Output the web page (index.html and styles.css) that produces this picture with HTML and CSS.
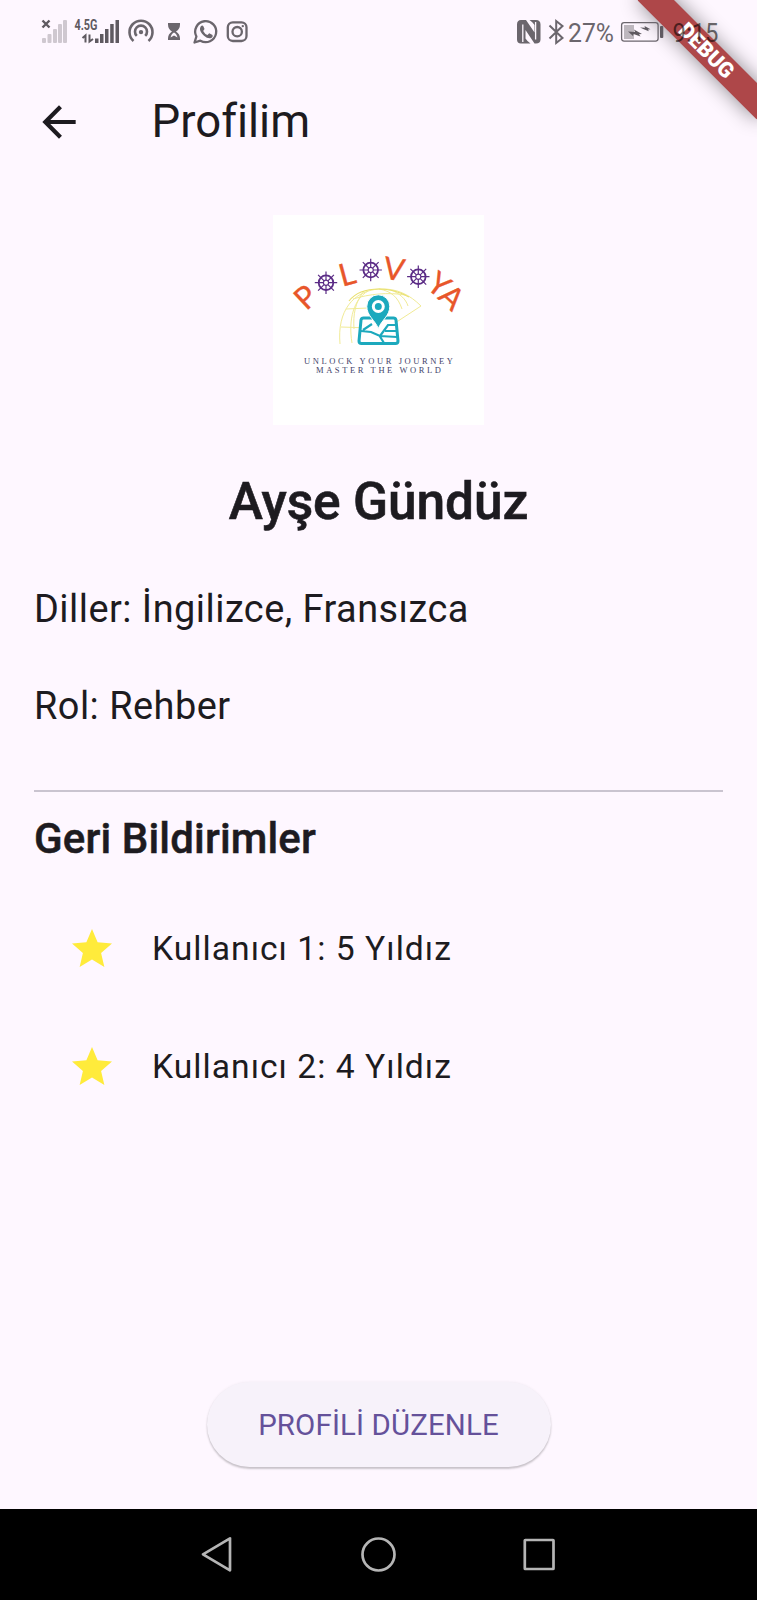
FILE: index.html
```html
<!DOCTYPE html>
<html lang="tr">
<head>
<meta charset="utf-8">
<title>Profilim</title>
<link rel="stylesheet" href="styles.css">
</head>
<body>
<div class="screen">
  <div class="ribbon"><span>DEBUG</span></div>
  <div class="status">
    <svg class="status-left" width="230" height="64" viewBox="30 0 230 64">
      <g fill="#cfc8d0"><rect x="42" y="38" width="4" height="5" rx="1"/><rect x="47.500" y="34" width="4" height="9" rx="1"/><rect x="53" y="29" width="4" height="14" rx="1"/><rect x="58" y="24" width="4" height="19" rx="1"/><rect x="63" y="20" width="4" height="23" rx="1"/></g>
      <path d="M42.500 20.500l7 7M49.500 20.500l-7 7" stroke="#5f5a61" stroke-width="2.400"/>
      <text class="net" x="74.500" y="30" textLength="23" lengthAdjust="spacingAndGlyphs">4.5G</text>
      <g fill="#5f5a61"><rect x="95" y="38.500" width="3.500" height="4.500"/><rect x="100" y="34" width="3.500" height="9"/><rect x="105" y="29" width="3.500" height="14"/><rect x="110.200" y="24" width="3.500" height="19"/><rect x="115.500" y="20" width="3.500" height="23"/></g>
      <path d="M82.500 38l3-2.500v7M89.500 34.500v7l3.500-2.500" fill="none" stroke="#5f5a61" stroke-width="2"/>
      <g transform="translate(0 -.6)"><g fill="none" stroke="#6b666d" stroke-width="2.600"><path d="M133.500 41.500a11.500 11.500 0 1 1 15 0"/><path d="M136.800 37a6 6 0 1 1 8.400 0" transform="translate(0 -.500)"/></g>
      <circle cx="141" cy="32.700" r="2.200" fill="#6b666d"/></g>
      <g transform="translate(0 4.500)">
        <path d="M168 18.500h12v1.500q0 4.500-4 7 4 2.500 4 7v1.500h-12V34q0-4.500 4-7-4-2.500-4-7z" fill="#6b666d"/>
        <path d="M170.500 33q1-4 3.500-5 2.500 1 3.500 5l-3.500-2z" fill="#fef7ff"/>
        <path d="M194.500 38.500l1.900-6a10.500 10.500 0 1 1 4 4.200z" fill="none" stroke="#6b666d" stroke-width="2.300" stroke-linejoin="round" transform="translate(0 -.5)"/>
        <path d="M201 21.500q1.500-1.300 2.500.5l1 2.500-1.300 2q1.500 3 4.300 4l1.700-1.700 3.300 1.700q.8 2.500-2 3.200-3 .6-6.500-2.500-4.500-4.200-4-7.200.2-1.500 1-2.500z" fill="#6b666d"/>
        <rect x="227.800" y="17.800" width="18.700" height="18.700" rx="5" fill="none" stroke="#6b666d" stroke-width="2.300"/>
        <circle cx="237.200" cy="27.200" r="4.700" fill="none" stroke="#6b666d" stroke-width="2.300"/><circle cx="242.800" cy="21.600" r="1.200" fill="#6b666d"/>
      </g>
    </svg>
    <svg class="status-right" width="230" height="64" viewBox="510 0 230 64">
      <path d="M521 20h5l8.500 12.500V25l-2-2.500L529.500 20H536q4.500 0 4.500 4.500v15q0 4-4.500 4h-1.500L525.500 30v8.500l2 2.500 3 2.500H521q-4 0-4-4v-15q0-4.500 4-4.500z" fill="#6b666d"/>
      <path d="M522.800 42V24.500M535.600 39.500V22" stroke="#fef7ff" stroke-width="1.300"/>
      <path d="M549.500 25.500l13 12.500-6.300 5V21l6.300 5-13 12.500" fill="none" stroke="#6b666d" stroke-width="2"/>
      <text class="stat" x="568" y="41.500" textLength="46" lengthAdjust="spacingAndGlyphs">27%</text>
      <rect x="621.600" y="22.600" width="36.500" height="18.500" rx="2.500" fill="none" stroke="#6b666d" stroke-width="1.300"/>
      <rect x="624" y="25" width="10" height="14" fill="#bdb7be"/>
      <path d="M628 31.500l7 .5-1-2.500 8 4.500-3 .2 1.500 2.300-7-2.500-.5 2zM640 27.500l5 .3-.5-1.800 6 3.300-2.500.2.800 1.800-5-2z" fill="#5f5a61"/>
      <rect x="660" y="26" width="3.300" height="12" rx="1" fill="#5f5a61"/>
      <text class="stat clock" x="672.500" y="41.500" textLength="46" lengthAdjust="spacingAndGlyphs">9:15</text>
    </svg>
  </div>
  <header class="appbar">
    <svg class="back" width="50" height="50" viewBox="0 0 24 24"><path fill="#1d1b20" d="M20 11H7.830l5.590-5.590L12 4l-8 8 8 8 1.410-1.410L7.830 13H20v-2z"/></svg>
    <h1 class="title">Profilim</h1>
  </header>
  <main class="content">
    <svg class="logo" width="211" height="210" viewBox="0 0 211 210">
      <defs>
        <g id="wheel" fill="none" stroke="#5b2c86">
          <circle r="7.300" stroke-width="1.800"/><circle r="2.600" stroke-width="1.200"/>
          <path stroke-width="1.200" d="M0-11.200v8.600M0 11.200V2.600M-11.200 0h8.600M11.200 0H2.600M-7.900-7.900l6 6M7.900 7.900l-6-6M-7.900 7.900l6-6M7.900-7.900l-6 6"/>
        </g>
      </defs>
      <rect width="211" height="210" fill="#fff"/>
      <g fill="none" stroke="#f1eb96" stroke-width="1">
        <path d="M67 129C64 96 80 76 106 74c18-1 31 6 42 17M68 112l30 1M73 94l22-1M80 84c16-5 36-7 52-4M79 128c-4-24 2-44 16-52M91 76c-9 11-11 24-10 38M106 74c12 2 19 8 23 20M118 75c8 3 15 9 17 16M148 91l-26 17"/>
      </g>
      <path d="M76 86C83 77 93 74 106 74c12 0 21 3 30 8" fill="none" stroke="#e9e070" stroke-width="1.200"/>
      <g class="mark">
        <text transform="translate(32.500 82) rotate(-43)" y="11">P</text>
        <text transform="translate(74 59) rotate(-15)" y="11">L</text>
        <text transform="translate(121 54) rotate(9)" y="11">V</text>
        <text transform="translate(166 69.500) rotate(37)" y="11">Y</text>
        <text transform="translate(179 82) rotate(43)" y="11">A</text>
      </g>
      <use href="#wheel" x="53" y="67.700"/><use href="#wheel" x="97.700" y="55"/><use href="#wheel" x="145.300" y="61.700"/>
      <path d="M90.500 103h30q2 0 2.500 2l2 21q0 2.500-2.500 2.500h-34q-2.500 0-2.500-2.500l2-21q.5-2 2.500-2z" fill="#fff" stroke="#1ca9bd" stroke-width="3"/>
      <path d="M88 116l10 1 9 4 17 1M90 115l9-6M107 121l8-11h8M106 120l5 8M112 116h12" fill="none" stroke="#1ca9bd" stroke-width="2.200"/>
      <path d="M105.300 113.500C102 105 93.800 101 93.800 91.300a11.500 11.500 0 0 1 23 0C116.800 101 108.600 105 105.300 113.500z" fill="#1ca9bd" stroke="#fff" stroke-width="1"/>
      <circle cx="105.300" cy="91.500" r="5" fill="#1ca9bd" stroke="#fff" stroke-width="3"/>
      <g class="motto"><text x="31" y="149" textLength="149">UNLOCK YOUR JOURNEY</text><text x="43" y="158" textLength="125">MASTER THE WORLD</text></g>
    </svg>
    <h2 class="name">Ayşe Gündüz</h2>
    <p class="info">Diller: İngilizce, Fransızca</p>
    <p class="info role">Rol: Rehber</p>
    <hr class="divider">
    <h3 class="subtitle">Geri Bildirimler</h3>
    <ul class="reviews">
      <li><svg class="star" width="48" height="50" viewBox="0 -.5 24 25"><path fill="#ffeb3b" d="M12 17.770L18.180 21.500l-1.640-7.030L22 9.740l-7.190-.61L12 2.500 9.190 9.130 2 9.740l5.460 4.730L5.820 21.500z"/></svg><span>Kullanıcı 1: 5 Yıldız</span></li>
      <li><svg class="star" width="48" height="50" viewBox="0 -.5 24 25"><path fill="#ffeb3b" d="M12 17.770L18.180 21.500l-1.640-7.030L22 9.740l-7.190-.61L12 2.500 9.190 9.130 2 9.740l5.460 4.730L5.820 21.500z"/></svg><span>Kullanıcı 2: 4 Yıldız</span></li>
    </ul>
    <button class="edit">PROFİLİ DÜZENLE</button>
  </main>
  <nav class="nav">
    <svg width="400" height="91" viewBox="180 1509 400 91" fill="none" stroke="#b5b5b5" stroke-width="2.700" stroke-linejoin="round">
      <path d="M203 1554.300l27-16v32z"/><circle cx="378.500" cy="1554.500" r="16"/><rect x="524.800" y="1540" width="28.700" height="29" rx=".5"/>
    </svg>
  </nav>
</div>
</body>
</html>
```

FILE: styles.css
```css
* { box-sizing: border-box; }
body { margin: 0; font-family: Roboto, "Noto Sans", sans-serif; color: #1d1b20; background: #fef7ff; }
h1, h2, h3, p, ul { margin: 0; padding: 0; font-weight: 400; }
.screen { position: relative; width: 757px; height: 1600px; overflow: hidden; display: flex; flex-direction: column; background: #fef7ff; }

.ribbon {
  position: absolute; top: 0; right: 0; width: 168px; height: 25.5px;
  transform-origin: 100% 0;
  transform: rotate(45deg) translate(84px, 58.700px);
  background: #ae4749; box-shadow: 0 0 20px rgba(0, 0, 0, .45);
  display: flex; align-items: center; justify-content: center;
}
.ribbon span { color: #fff; font-size: 21.400px; font-weight: 900; line-height: 25px; }

.status { position: relative; height: 64px; padding: 0 17px 0 30px; display: flex; justify-content: space-between; }
.net { font-family: Roboto, sans-serif; font-size: 14px; font-weight: 700; fill: #5f5a61; }
.stat { font-size: 25px; fill: #6b666d; }
.clock { fill: #000; fill-opacity: .58; }

.appbar { height: 115px; padding-left: 34px; display: flex; align-items: center; gap: 67.500px; }
.title { font-size: 45.500px; line-height: 60px; }

.content { flex: 1; padding: 36px 34px 0; display: flex; flex-direction: column; }
.logo { align-self: center; }
.mark { font-family: Lato, sans-serif; font-size: 31px; fill: #e8562a; stroke: #e8562a; stroke-width: .3; text-anchor: middle; }
.motto { font-family: "Liberation Serif", serif; font-size: 8.500px; fill: #44446a; }
.name { margin-top: 47px; text-align: center; font-size: 51.500px; font-weight: 500; line-height: 60px; letter-spacing: -.150px; -webkit-text-stroke: .6px #1d1b20; }
.info { margin-top: 50px; font-size: 37.900px; line-height: 54px; letter-spacing: .480px; }
.role { margin-top: 43px; }
.divider { width: 100%; height: 2px; margin: 57px 0 17px; border: 0; background: #cac4d0; }
.subtitle { font-size: 42px; font-weight: 500; line-height: 60px; letter-spacing: .150px; -webkit-text-stroke: .5px #1d1b20; }
.reviews { list-style: none; margin-top: 20px; }
.reviews li { height: 118px; padding-left: 34px; display: flex; align-items: center; gap: 36px; font-size: 33.650px; letter-spacing: 1.020px; }
.edit {
  align-self: center; margin-top: 257px; width: 344px; height: 85px; border: 0; border-radius: 43px;
  background: #f7f2fa; color: #65519a; font-family: Roboto, sans-serif; font-size: 29.400px; letter-spacing: .150px;
  box-shadow: 0 2px 2px rgba(0, 0, 0, .2), 0 0 3px rgba(0, 0, 0, .06);
}
.nav { height: 91px; background: #000; display: flex; padding-left: 180px; }
```
